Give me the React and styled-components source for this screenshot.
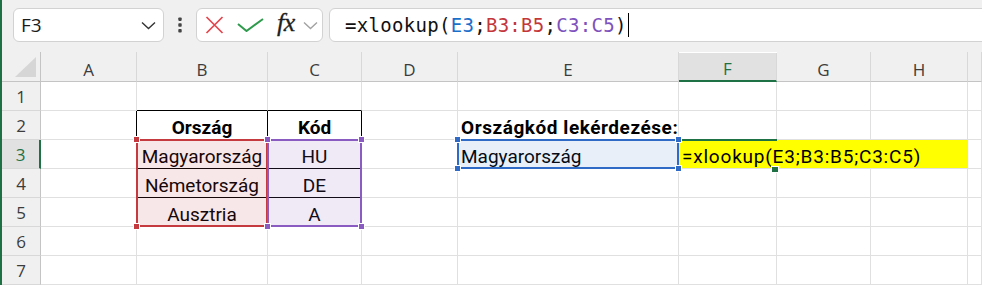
import React from 'react';
import styled, { createGlobalStyle } from 'styled-components';

const GREEN = '#1e7145';
const GRID = '#e0e0e0';

const GlobalStyle = createGlobalStyle`
  html, body { margin: 0; padding: 0; background: #fff; overflow: hidden; }
  * { box-sizing: border-box; }
`;

const Frame = styled.div`
  width: 982px;
  height: 285px;
  border-left: 2px solid ${GREEN};
  background: #f0f0f0;
  display: flex;
  flex-direction: column;
  overflow: hidden;
`;

const TopBar = styled.div`
  height: 52px;
  flex: none;
  display: flex;
  align-items: flex-start;
  padding: 8px 0 0 11px;
`;

const Field = styled.div`
  height: 34px;
  flex: none;
  background: #fff;
  border: 1px solid #d2d2d2;
  border-radius: 6px;
  display: flex;
  align-items: center;
`;

const NameBox = styled(Field)`
  width: 151px;
  padding: 0 7px 0 7px;
  justify-content: space-between;
  font: 19px 'Open Sans', sans-serif;
  color: #1b1b1b;
`;

const Kebab = styled.div`
  width: 32px;
  height: 34px;
  display: flex;
  align-items: center;
  justify-content: center;
`;

const FxBox = styled(Field)`
  width: 127px;
  padding: 0 0 0 8px;
`;

const FxLabel = styled.span`
  font: italic 26px 'Liberation Serif', serif;
  color: #1f1f1f;
  margin: 0 8px 4px 13px;
  letter-spacing: -0.5px;
  -webkit-text-stroke: 0.3px #1f1f1f;
`;

const FormulaBox = styled(Field)`
  flex: 1;
  margin: 0 -12px 0 6px;
  padding-left: 15px;
  font: 19px 'DejaVu Sans Mono', monospace;
  letter-spacing: 0.3px;
  color: #111;
  white-space: pre;
`;

const Ref = styled.span`
  color: ${(p) => p.$color};
`;

const Caret = styled.span`
  display: inline-block;
  width: 1px;
  height: 24px;
  background: #000;
  margin-left: 1px;
`;

const Sheet = styled.div`
  flex: 1;
  display: grid;
  grid-template-columns: 39px 96px 131px 94px 96px 221px 98px 94px 97px 1fr;
  grid-template-rows: 30px repeat(7, 29px);
  background: #fff;
`;

const Corner = styled.div`
  grid-column: 1;
  grid-row: 1;
  background: #f0f0f0;
  border-right: 1px solid #c4c4c4;
  border-bottom: 1px solid #c4c4c4;
  display: flex;
  align-items: flex-end;
  justify-content: flex-end;
  padding: 0 3px 4px 0;
`;

const ColHead = styled.div`
  grid-column: ${(p) => p.$col};
  grid-row: 1;
  background: ${(p) => (p.$active ? '#e1e1e1' : '#f0f0f0')};
  border-right: 1px solid #d8d8d8;
  border-bottom: ${(p) => (p.$active ? `2px solid ${GREEN}` : '1px solid #c4c4c4')};
  margin-top: ${(p) => (p.$active ? '1px' : '0')};
  display: flex;
  align-items: flex-end;
  justify-content: center;
  font: 17px 'Open Sans', sans-serif;
  color: ${(p) => (p.$active ? GREEN : '#3c3c3c')};
`;

const RowHead = styled.div`
  grid-column: 1;
  grid-row: ${(p) => p.$row};
  background: ${(p) => (p.$active ? '#e1e1e1' : '#f0f0f0')};
  border-right: ${(p) => (p.$active ? `2px solid ${GREEN}` : '1px solid #c4c4c4')};
  border-bottom: 1px solid #d8d8d8;
  display: flex;
  align-items: center;
  justify-content: center;
  font: 17px 'Open Sans', sans-serif;
  color: ${(p) => (p.$active ? GREEN : '#3c3c3c')};
`;

const Cell = styled.div`
  grid-column: ${(p) => p.$col};
  grid-row: ${(p) => p.$row};
  background: ${(p) => p.$fill || '#fff'};
  border-right: 1px solid ${(p) => p.$right};
  border-bottom: 1px solid ${(p) => p.$bottom};
  display: flex;
  align-items: flex-end;
  justify-content: ${(p) => (p.$align === 'center' ? 'center' : 'flex-start')};
  padding: 0 3px;
  font: ${(p) => (p.$bold ? 700 : 400)} 19px Roboto, sans-serif;
  letter-spacing: ${(p) => p.$spacing || 0}px;
  color: #000;
  white-space: nowrap;
  overflow: visible;
`;

const Range = styled.div`
  grid-column: ${(p) => p.$col};
  grid-row: ${(p) => p.$row};
  position: relative;
  margin: -1px 0 0 -1px;
  border: 2px solid ${(p) => p.$color};
  background: ${(p) => p.$tint};
  pointer-events: none;
`;

const ActiveCell = styled.div`
  grid-column: ${(p) => p.$col};
  grid-row: ${(p) => p.$row};
  position: relative;
  margin: -1px 0 0 -1px;
  border-top: 2px solid ${GREEN};
  pointer-events: none;
`;

const Handle = styled.span`
  position: absolute;
  width: 5px;
  height: 5px;
  background: ${(p) => p.$color};
  box-shadow: 0 0 0 1px #fff;
  ${(p) => (p.$pos[0] === 't' ? 'top: -4px;' : 'bottom: -4px;')}
  ${(p) => (p.$pos[1] === 'l' ? 'left: -4px;' : 'right: -4px;')}
`;

const FillHandle = styled.span`
  position: absolute;
  right: -1px;
  bottom: -3px;
  width: 6px;
  height: 5px;
  background: ${GREEN};
  box-shadow: 0 0 0 1px #fff;
`;

const COLUMNS = ['A', 'B', 'C', 'D', 'E', 'F', 'G', 'H', ''];
const ROWS = [1, 2, 3, 4, 5, 6, 7];

const CELLS = {
  B2: { text: 'Ország', bold: true, align: 'center' },
  C2: { text: 'Kód', bold: true, align: 'center' },
  E2: { text: 'Országkód lekérdezése:', bold: true, spacing: 0.55 },
  B3: { text: 'Magyarország', align: 'center' },
  C3: { text: 'HU', align: 'center' },
  E3: { text: 'Magyarország' },
  F3: { text: '=xlookup(E3;B3:B5;C3:C5)', fill: '#ffff00', span: 3, spacing: 0.8 },
  B4: { text: 'Németország', align: 'center' },
  C4: { text: 'DE', align: 'center' },
  B5: { text: 'Ausztria', align: 'center' },
  C5: { text: 'A', align: 'center' },
};

const SKIP = ['G3', 'H3'];

const inTable = (c, r) => r >= 2 && r <= 5 && (c === 'B' || c === 'C');

const edges = (c, r) => {
  const right = inTable(c, r) || (c === 'A' && r >= 2 && r <= 5) ? '#000' : GRID;
  const bottom = inTable(c, r) || (r === 1 && (c === 'B' || c === 'C')) ? '#000' : GRID;
  return { right, bottom };
};

const RANGES = [
  { col: '3', row: '4 / 7', color: '#c43a3e', tint: 'rgba(196, 58, 62, 0.12)' },
  { col: '4', row: '4 / 7', color: '#8a5cc2', tint: 'rgba(138, 92, 194, 0.13)' },
  { col: '6', row: '4', color: '#2f6bc6', tint: 'rgba(47, 107, 198, 0.11)' },
];

const Chevron = ({ color }) => (
  <svg width="15" height="9" viewBox="0 0 15 9">
    <polyline points="1,1.5 7.5,7.5 14,1.5" fill="none" stroke={color} strokeWidth="1.4" />
  </svg>
);

const App = () => {
  const cells = [];
  ROWS.forEach((r) => {
    COLUMNS.forEach((c, i) => {
      const key = `${c}${r}`;
      if (SKIP.includes(key)) return;
      const data = CELLS[key] || {};
      const { right, bottom } = edges(c, r);
      const col = data.span ? `${i + 2} / span ${data.span}` : `${i + 2}`;
      cells.push(
        <Cell
          key={key || `x${r}`}
          $col={col}
          $row={r + 1}
          $right={right}
          $bottom={bottom}
          $bold={data.bold}
          $align={data.align}
          $fill={data.fill}
          $spacing={data.spacing}
        >
          {data.text}
        </Cell>,
      );
    });
  });

  return (
    <>
      <GlobalStyle />
      <Frame>
        <TopBar>
          <NameBox>
            <span>F3</span>
            <Chevron color="#333" />
          </NameBox>
          <Kebab>
            <svg width="4" height="16" viewBox="0 0 4 16">
              <rect x="0.3" y="0.5" width="3.4" height="3.4" rx="0.8" fill="#444" />
              <rect x="0.3" y="6.3" width="3.4" height="3.4" rx="0.8" fill="#444" />
              <rect x="0.3" y="12.1" width="3.4" height="3.4" rx="0.8" fill="#444" />
            </svg>
          </Kebab>
          <FxBox>
            <svg width="19" height="18" viewBox="0 0 19 18">
              <path d="M1.5 1 L17.5 17 M17.5 1 L1.5 17" stroke="#e5434a" strokeWidth="1.7" fill="none" />
            </svg>
            <svg width="27" height="14" viewBox="0 0 27 14" style={{ marginLeft: 13 }}>
              <path d="M1 6 L9.5 13 L26 1" stroke="#2e9a4c" strokeWidth="2" fill="none" />
            </svg>
            <FxLabel>fx</FxLabel>
            <Chevron color="#a2a2a2" />
          </FxBox>
          <FormulaBox>
            =xlookup(
            <Ref $color="#1a6fc9">E3</Ref>;
            <Ref $color="#c3373b">B3:B5</Ref>;
            <Ref $color="#7e52bd">C3:C5</Ref>)
            <Caret />
          </FormulaBox>
        </TopBar>
        <Sheet>
          <Corner>
            <svg width="22" height="20" viewBox="0 0 22 20">
              <polygon points="21,0 21,20 0,20" fill="#d6d6d6" />
            </svg>
          </Corner>
          {COLUMNS.map((c, i) => (
            <ColHead key={`h${i}`} $col={i + 2} $active={c === 'F'}>{c}</ColHead>
          ))}
          {ROWS.map((r) => (
            <RowHead key={`r${r}`} $row={r + 1} $active={r === 3}>{r}</RowHead>
          ))}
          {cells}
          <ActiveCell $col="7" $row="4">
            <FillHandle />
          </ActiveCell>
          {RANGES.map((g) => (
            <Range key={g.col} $col={g.col} $row={g.row} $color={g.color} $tint={g.tint}>
              {['tl', 'tr', 'bl', 'br'].map((p) => (
                <Handle key={p} $pos={p} $color={g.color} />
              ))}
            </Range>
          ))}
        </Sheet>
      </Frame>
    </>
  );
};

export default App;
